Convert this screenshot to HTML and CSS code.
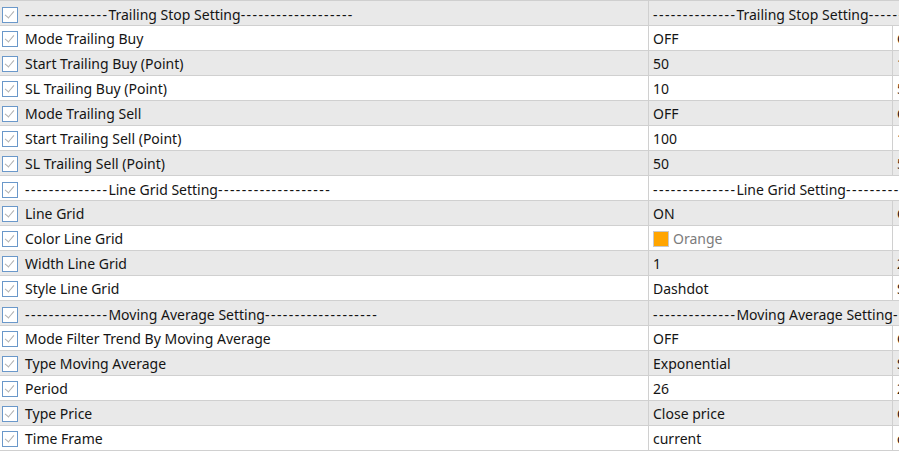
FILE: index.html
```html
<!DOCTYPE html>
<html>
<head>
<meta charset="utf-8">
<link rel="stylesheet" href="styles.css">
</head>
<body>
<div class="grid">
  <div class="row sep"><div class="c1"><span class="cb"></span><span class="t"><span class="d">--------------</span>Trailing Stop Setting<span class="d">-------------------</span></span></div><div class="c2 span"><span class="d">--------------</span>Trailing Stop Setting<span class="d">--------------------</span></div></div>
  <div class="row"><div class="c1"><span class="cb"></span><span class="t">Mode Trailing Buy</span></div><div class="c2">OFF</div><div class="c3">OFF</div></div>
  <div class="row"><div class="c1"><span class="cb"></span><span class="t">Start Trailing Buy (Point)</span></div><div class="c2">50</div><div class="c3">100</div></div>
  <div class="row"><div class="c1"><span class="cb"></span><span class="t">SL Trailing Buy (Point)</span></div><div class="c2">10</div><div class="c3">50</div></div>
  <div class="row"><div class="c1"><span class="cb"></span><span class="t">Mode Trailing Sell</span></div><div class="c2">OFF</div><div class="c3">OFF</div></div>
  <div class="row"><div class="c1"><span class="cb"></span><span class="t">Start Trailing Sell (Point)</span></div><div class="c2">100</div><div class="c3">100</div></div>
  <div class="row"><div class="c1"><span class="cb"></span><span class="t">SL Trailing Sell (Point)</span></div><div class="c2">50</div><div class="c3">50</div></div>
  <div class="row sep"><div class="c1"><span class="cb"></span><span class="t"><span class="d">--------------</span>Line Grid Setting<span class="d">-------------------</span></span></div><div class="c2 span"><span class="d">--------------</span>Line Grid Setting<span class="d">--------------------</span></div></div>
  <div class="row"><div class="c1"><span class="cb"></span><span class="t">Line Grid</span></div><div class="c2">ON</div><div class="c3">OFF</div></div>
  <div class="row"><div class="c1"><span class="cb"></span><span class="t">Color Line Grid</span></div><div class="c2"><span class="sw"></span><span class="muted">Orange</span></div><div class="c3"></div></div>
  <div class="row"><div class="c1"><span class="cb"></span><span class="t">Width Line Grid</span></div><div class="c2">1</div><div class="c3">2</div></div>
  <div class="row"><div class="c1"><span class="cb"></span><span class="t">Style Line Grid</span></div><div class="c2">Dashdot</div><div class="c3">Solid</div></div>
  <div class="row sep"><div class="c1"><span class="cb"></span><span class="t"><span class="d">--------------</span>Moving Average Setting<span class="d">-------------------</span></span></div><div class="c2 span"><span class="d">--------------</span>Moving Average Setting<span class="d">--------------------</span></div></div>
  <div class="row"><div class="c1"><span class="cb"></span><span class="t">Mode Filter Trend By Moving Average</span></div><div class="c2">OFF</div><div class="c3">OFF</div></div>
  <div class="row"><div class="c1"><span class="cb"></span><span class="t">Type Moving Average</span></div><div class="c2">Exponential</div><div class="c3">Simple</div></div>
  <div class="row"><div class="c1"><span class="cb"></span><span class="t">Period</span></div><div class="c2">26</div><div class="c3">20</div></div>
  <div class="row"><div class="c1"><span class="cb"></span><span class="t">Type Price</span></div><div class="c2">Close price</div><div class="c3">Close price</div></div>
  <div class="row"><div class="c1"><span class="cb"></span><span class="t">Time Frame</span></div><div class="c2">current</div><div class="c3">current</div></div>
</div>
</body>
</html>
```
FILE: styles.css
```css
html, body {
  margin: 0;
  padding: 0;
  background: #ffffff;
  overflow: hidden;
}
body {
  width: 899px;
  height: 451px;
  font-family: "Noto Sans", "Open Sans", sans-serif;
  font-size: 14px;
  color: #141414;
}
.grid {
  width: 1100px;
  border-top: 1px solid #cfcfcf;
}
.row {
  display: grid;
  grid-template-columns: 649px 244px 1fr;
  height: 24px;
  border-bottom: 1px solid #d0d0d0;
  background: #ffffff;
}
.row:nth-child(odd) {
  background: #e9e9e9;
}
.c1, .c2, .c3 {
  display: flex;
  align-items: center;
  white-space: nowrap;
  overflow: hidden;
  line-height: 24px;
  padding-top: 2px;
  box-sizing: border-box;
}
.c1 {
  border-right: 1px solid #d0d0d0;
  padding-left: 2px;
}
.c2 {
  border-right: 1px solid #d0d0d0;
  padding-left: 4px;
}
.c2.span {
  grid-column: 2 / 4;
  border-right: none;
  overflow: visible;
}
.c3 {
  padding-left: 4px;
}
.d {
  letter-spacing: 1.45px;
}
.cb {
  position: relative;
  width: 14px;
  height: 14px;
  border: 1px solid #6a98ca;
  background: #ffffff;
  flex: none;
  margin-right: 7px;
}
.cb::after {
  content: "";
  position: absolute;
  left: 4px;
  top: 1px;
  width: 4px;
  height: 8px;
  border-right: 1.5px solid #b0b0b0;
  border-bottom: 1.5px solid #b0b0b0;
  transform: rotate(40deg);
}
.sw {
  width: 16px;
  height: 16px;
  background: #ffa500;
  border: 1px solid #c9c9c9;
  box-sizing: border-box;
  margin-right: 4px;
  flex: none;
}
.muted {
  color: #7c7c7c;
}
```
